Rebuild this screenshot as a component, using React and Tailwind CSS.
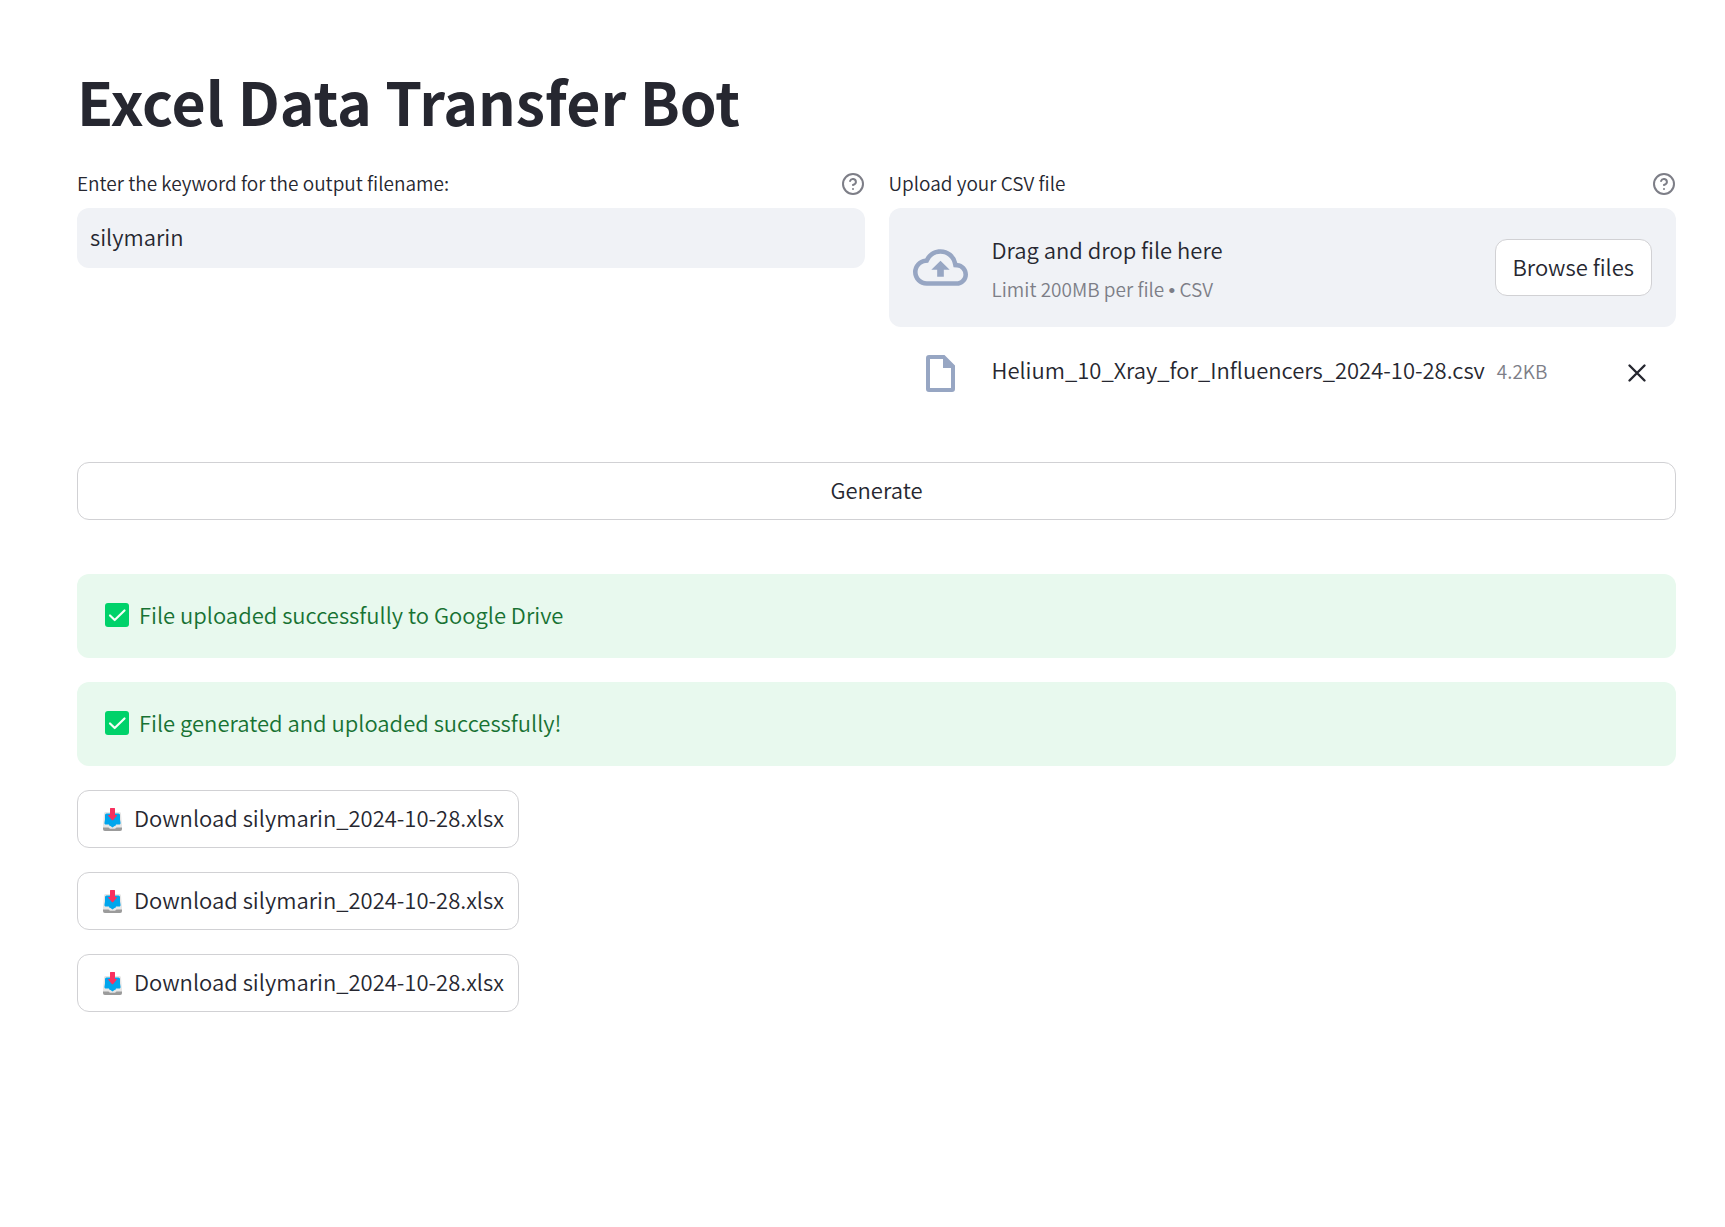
import { useState } from "react";
import { MdOutlineCloudUpload } from "react-icons/md";

const downloads = [
  { id: 1, name: "silymarin_2024-10-28.xlsx" },
  { id: 2, name: "silymarin_2024-10-28.xlsx" },
  { id: 3, name: "silymarin_2024-10-28.xlsx" },
];

const messages = [
  "File uploaded successfully to Google Drive",
  "File generated and uploaded successfully!",
];

function HelpIcon() {
  return (
    <svg
      className="size-6"
      viewBox="0 0 24 24"
      fill="none"
      stroke="currentColor"
      strokeWidth="2"
      strokeLinecap="round"
      strokeLinejoin="round"
      aria-hidden="true"
    >
      <circle cx="12" cy="12" r="10" />
      <path d="M9.09 9a3 3 0 0 1 5.83 1c0 2-3 3-3 3" />
      <path d="M12 17h.01" />
    </svg>
  );
}

function HelpButton({ label }) {
  return (
    <button type="button" aria-label={label} className="text-[#7d7e87]">
      <HelpIcon />
    </button>
  );
}

function FileIcon() {
  return (
    <svg className="h-[37px] w-[29px]" viewBox="0 0 29 37" aria-hidden="true">
      <path
        fill="#97a6c3"
        fillRule="evenodd"
        d="M3 0H18.500L29 10.500V34a3 3 0 0 1-3 3H3a3 3 0 0 1-3-3V3a3 3 0 0 1 3-3ZM4 4V33H25V13H17V4Z"
      />
    </svg>
  );
}

function CloseIcon() {
  return (
    <svg
      className="size-5"
      viewBox="0 0 20 20"
      fill="none"
      stroke="currentColor"
      strokeWidth="2.4"
      strokeLinecap="round"
      aria-hidden="true"
    >
      <path d="M2.500 2.500l15 15M17.500 2.500l-15 15" />
    </svg>
  );
}

function CheckIcon() {
  return (
    <svg className="size-6 shrink-0" viewBox="0 0 24 24" aria-hidden="true">
      <rect width="24" height="24" rx="3" fill="#00d26a" />
      <path
        d="M5 12.500l4.700 4.500L19.500 7.500"
        fill="none"
        stroke="#f4fff8"
        strokeWidth="2.200"
        strokeLinecap="round"
        strokeLinejoin="round"
      />
    </svg>
  );
}

function InboxIcon() {
  return (
    <svg className="h-[23px] w-[19px] shrink-0" viewBox="0 0 19 23" aria-hidden="true">
      <path d="M2.500 4h14a1.500 1.500 0 0 1 1.500 1.500L19 17v4a2 2 0 0 1-2 2H2a2 2 0 0 1-2-2v-4L1 5.500A1.500 1.500 0 0 1 2.500 4Z" fill="#e6e6e6" />
      <path d="M0 19.500h5.500l1.500 1.300h5l1.500-1.300H19V21a2 2 0 0 1-2 2H2a2 2 0 0 1-2-2Z" fill="#9b9b9b" />
      <path d="M3.500 5.500h12A1.500 1.500 0 0 1 17 7v4.500l.5 3a1.500 1.500 0 0 1-1.500 2H13Q12.800 18 11.500 18L9.500 19.500 7.500 18Q6.200 18 6 16.500H3a1.500 1.500 0 0 1-1.500-2l.5-3V7A1.500 1.500 0 0 1 3.500 5.500Z" fill="#00a6ed" />
      <path d="M7.500 0h4a.5.5 0 0 1 .5.5V7h1.500q.8 0 .3.800L10.200 12q-.7.700-1.400 0L5.200 7.800Q4.700 7 5.500 7H7V.5a.5.5 0 0 1 .5-.5Z" fill="#f8315f" />
    </svg>
  );
}

export default function App() {
  const [keyword, setKeyword] = useState("silymarin");

  return (
    <main className="min-h-screen bg-white pt-[65px] pr-[49px] pb-24 pl-[77px] font-['Noto_Sans_CJK_SC',sans-serif] text-[22px] leading-9 font-[350] text-[#262730]">
      <h1 className="text-[59px] leading-[72px] font-bold text-[#262730]">Excel Data Transfer Bot</h1>

      <div className="mt-[29px] grid grid-cols-2 gap-6">
        <section>
          <div className="mb-[7px] flex h-[35px] items-center justify-between">
            <label htmlFor="keyword" className="pb-[2px] text-[19px] leading-7">
              Enter the keyword for the output filename:
            </label>
            <HelpButton label="Help for the keyword" />
          </div>
          <input
            id="keyword"
            type="text"
            value={keyword}
            onChange={(e) => setKeyword(e.target.value)}
            className="h-[60px] w-full rounded-xl bg-[#f0f2f6] px-[13px] pb-1 outline-none"
          />
        </section>

        <section>
          <div className="mb-[7px] flex h-[35px] items-center justify-between">
            <span id="upload-label" className="pb-[2px] text-[19px] leading-7">
              Upload your CSV file
            </span>
            <HelpButton label="Help for the upload" />
          </div>
          <div
            role="group"
            aria-labelledby="upload-label"
            className="flex h-[119px] items-center rounded-xl bg-[#f0f2f6] px-6"
          >
            <MdOutlineCloudUpload className="mr-6 size-[55px] shrink-0 text-[#97a6c3]" />
            <div className="flex-1 pt-1">
              <div className="leading-10">Drag and drop file here</div>
              <div className="text-[19px] leading-10 text-[#7d7e87]">
                Limit 200MB per file <span className="font-['Liberation_Sans',sans-serif]">•</span> CSV
              </div>
            </div>
            <button type="button" className="h-[57px] rounded-xl border border-[#d1d1d4] bg-white px-[17px] pb-1">
              Browse files
            </button>
          </div>
          <div className="mt-[22px] flex h-12 items-center px-6">
            <div className="mr-6 flex w-[55px] shrink-0 justify-center">
              <FileIcon />
            </div>
            <div className="flex flex-1 items-baseline gap-3 pb-[6px] whitespace-nowrap">
              <span>Helium_10_Xray_for_Influencers_2024-10-28.csv</span>
              <span className="text-[19px] text-[#7d7e87]">4.2KB</span>
            </div>
            <button type="button" aria-label="Remove file" className="mr-[5px] text-[#262730]">
              <CloseIcon />
            </button>
          </div>
        </section>
      </div>

      <button type="button" className="mt-[65px] block h-[58px] w-full rounded-xl border border-[#d1d1d4] pb-1">
        Generate
      </button>

      <div className="mt-[54px] flex flex-col gap-6">
        {messages.map((message) => (
          <div
            key={message}
            role="status"
            className="flex h-[84px] items-center gap-[10px] rounded-xl bg-[#e8f9ee] px-7 pb-[2px] text-[#177233]"
          >
            <CheckIcon />
            <p className="pb-[2px]">{message}</p>
          </div>
        ))}
        {downloads.map((file) => (
          <button
            key={file.id}
            type="button"
            className="flex h-[58px] items-center gap-3 self-start rounded-xl border border-[#d1d1d4] pr-[14px] pl-[25px]"
          >
            <InboxIcon />
            <span className="pb-1">Download {file.name}</span>
          </button>
        ))}
      </div>
    </main>
  );
}
